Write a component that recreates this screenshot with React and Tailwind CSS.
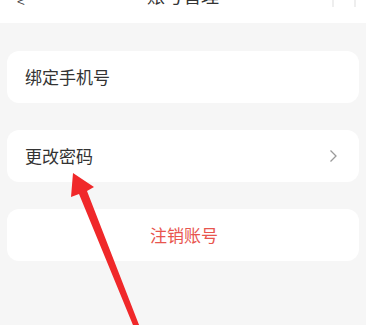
import React from "react";

function Card({ children, className = "" }) {
  return (
    <div className={"mx-[7px] h-[52px] rounded-[12px] bg-white flex items-center " + className}>
      {children}
    </div>
  );
}

export default function App() {
  return (
    <div
      className="relative w-[366px] h-[325px] overflow-hidden bg-[#f6f6f6]"
      style={{ fontFamily: '"Noto Sans CJK SC", "Noto Sans", sans-serif' }}
    >
      <div className="relative h-[23px] bg-white overflow-hidden">
        <div className="flex justify-center mt-[-15px]">
          <span className="text-[18px] leading-[20px] text-[#333]">账号管理</span>
        </div>
        <span className="absolute left-[17px] top-[-9px] text-[14px] text-[#444]">&lt;</span>
        <div className="absolute right-[10px] top-0 flex gap-[20px]">
          <span className="w-[2px] h-[7px] bg-[#eee]"></span>
          <span className="w-[2px] h-[7px] bg-[#eee]"></span>
        </div>
      </div>

      <div className="flex flex-col gap-[27px] pt-[28px]">
        <Card className="px-[18px]">
          <span className="text-[17px] text-[#333]">绑定手机号</span>
        </Card>
        <Card className="px-[18px] justify-between">
          <span className="text-[17px] text-[#333]">更改密码</span>
          <svg width="9" height="14" viewBox="0 0 9 14" className="mr-[3px]">
            <path d="M1.5 1.5 L7 7 L1.5 12.5" fill="none" stroke="#9a9a9a" strokeWidth="1.3" />
          </svg>
        </Card>
        <Card className="justify-center">
          <span className="text-[17px] text-[#e8554e] ml-[2px]">注销账号</span>
        </Card>
      </div>

      <svg className="absolute left-0 top-0 pointer-events-none" width="366" height="325">
        <polygon
          points="73,173 94,187 87,191 141,330 135,330 79,194 71,197"
          fill="#f0282a"
        />
      </svg>
    </div>
  );
}
